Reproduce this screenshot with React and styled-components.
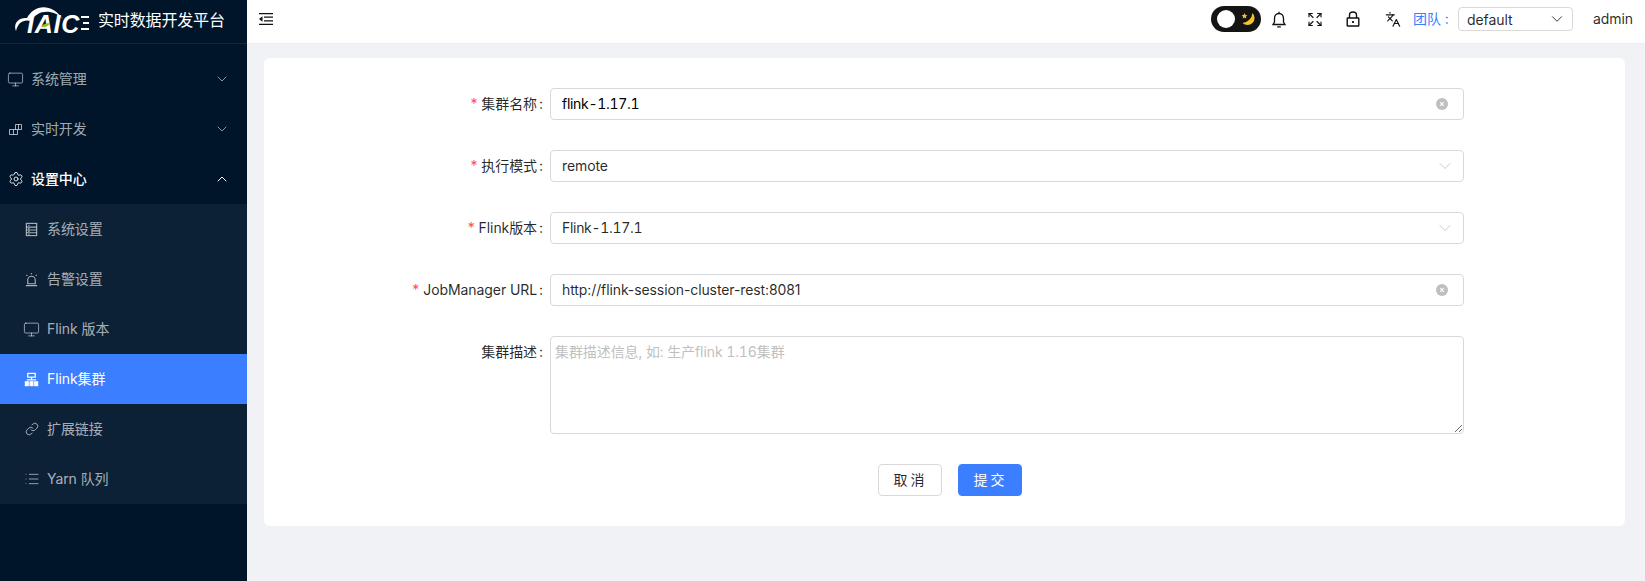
import React from "react";
import styled, { createGlobalStyle } from "styled-components";
import { ChevronDown, ChevronUp, Monitor, Settings, Link, List, Expand, Languages } from "lucide-react";

const GlobalStyle = createGlobalStyle`
  html, body {
    margin: 0;
    height: 100%;
    overflow: hidden;
    background: #f0f2f5;
    font-family: Inter, "Noto Sans CJK SC", sans-serif;
    font-size: 14px;
    letter-spacing: -0.08px;
    color: rgba(0, 0, 0, 0.85);
  }
  * { box-sizing: border-box; }
`;

const Layout = styled.div`
  display: flex;
  width: 1645px;
  height: 581px;
`;

const Sider = styled.aside`
  width: 247px;
  flex: none;
  background: #001529;
  color: rgba(255, 255, 255, 0.65);
`;

const LogoBar = styled.div`
  display: flex;
  height: 44px;
  padding-left: 14px;
  border-bottom: 1px solid #14263a;
`;

const LogoMark = styled.div`
  position: relative;
  width: 76px;
  height: 36px;
  flex: none;
  svg { position: absolute; left: 0; top: 0; }
`;

const LogoLetters = styled.span`
  position: absolute;
  left: 13px;
  top: 12px;
  font: italic 700 25px/25px "Liberation Sans", sans-serif;
  letter-spacing: 0.8px;
  color: #fff;
`;

const LogoLeaf = styled.svg`
  z-index: 1;
`;

const LogoTitle = styled.span`
  margin: 8px 0 0 8px;
  color: #fff;
  font-size: 16px;
  line-height: 24px;
  letter-spacing: -0.15px;
  white-space: nowrap;
`;

const Menu = styled.nav`
  padding-top: 10px;
`;

const MenuItem = styled.div`
  display: flex;
  align-items: center;
  height: 50px;
  padding-left: ${(p) => (p.$sub ? "24px" : "8px")};
  padding-right: 17px;
  gap: 8px;
  background: ${(p) => (p.$active ? "#3b7eff" : "transparent")};
  color: ${(p) => (p.$active || p.$open ? "#fff" : "rgba(255,255,255,0.65)")};
  font-size: 14px;
  font-weight: ${(p) => (p.$open ? 500 : 400)};
  svg { flex: none; }
`;

const MenuIcon = styled.span`
  display: flex;
  justify-content: center;
  align-items: center;
  width: 15px;
  flex: none;
`;

const MenuLabel = styled.span`
  flex: 1;
  margin-bottom: 2px;
`;

const SubMenu = styled.div`
  background: #0d2136;
`;

const Main = styled.div`
  flex: 1;
  min-width: 0;
  display: flex;
  flex-direction: column;
`;

const Header = styled.header`
  display: flex;
  align-items: center;
  height: 44px;
  flex: none;
  padding: 0 12px 5px 12px;
  background: #fff;
  border-bottom: 1px solid #eceef1;
`;

const HeaderTools = styled.div`
  margin-left: auto;
  display: flex;
  align-items: center;
  color: #111;
`;

const ThemeSwitch = styled.div`
  position: relative;
  width: 50px;
  height: 26px;
  border-radius: 13px;
  background: #141414;
  margin-right: 10px;
`;

const SwitchKnob = styled.span`
  position: absolute;
  left: 6px;
  top: 4px;
  width: 18px;
  height: 18px;
  border-radius: 50%;
  background: #fff;
`;

const SwitchMoon = styled.svg`
  position: absolute;
  right: 4px;
  top: 4px;
`;

const ToolIcon = styled.span`
  display: flex;
  width: 16px;
  justify-content: center;
  margin-right: ${(p) => p.$gap}px;
`;

const TeamLabel = styled.span`
  width: 35px;
  color: #3b7eff;
  margin: 0 10px 2px 0;
  white-space: nowrap;
`;

const TeamSelect = styled.div`
  display: flex;
  align-items: center;
  justify-content: space-between;
  width: 115px;
  height: 24px;
  padding: 0 6px 0 8px;
  border: 1px solid #d9d9d9;
  border-radius: 4px;
  margin-right: 20px;
  color: rgba(0, 0, 0, 0.85);
`;

const UserName = styled.span`
  color: rgba(0, 0, 0, 0.85);
  margin-bottom: 1px;
`;

const Content = styled.main`
  flex: 1;
  padding: 14px 20px 0 17px;
`;

const Card = styled.section`
  height: 468px;
  background: #fff;
  border-radius: 6px;
  padding-top: 30px;
`;

const Form = styled.form`
  display: grid;
  grid-template-columns: 286px 914px;
  row-gap: 30px;
  align-items: start;
`;

const FieldLabel = styled.label`
  display: flex;
  justify-content: flex-end;
  align-items: center;
  height: 32px;
  padding-bottom: 2px;
  white-space: nowrap;
`;

const Required = styled.span`
  color: #ff4d4f;
  margin-right: 4px;
`;

const Colon = styled.span`
  margin: 0 7px 0 2px;
`;

const Control = styled.div`
  display: flex;
  align-items: center;
  justify-content: space-between;
  height: 32px;
  padding: 0 15px 2px 11px;
  border: 1px solid #d9d9d9;
  border-radius: 4px;
  color: ${(p) => (p.$strong ? "#000" : "rgba(0,0,0,0.85)")};
  font-variant-numeric: ${(p) => (p.$tabular ? "tabular-nums" : "normal")};
  letter-spacing: ${(p) => (p.$tabular ? "-0.3px" : "-0.1px")};
`;

const TextArea = styled.textarea`
  display: block;
  width: 100%;
  height: 98px;
  padding: 4px;
  border: 1px solid #d9d9d9;
  border-radius: 4px;
  font: inherit;
  font-variant-numeric: tabular-nums;
  letter-spacing: inherit;
  outline: none;
  &::placeholder { color: #bfbfbf; }
`;

const Actions = styled.div`
  display: flex;
  justify-content: center;
  gap: 16px;
  margin: 30px 0 0 11px;
`;

const Button = styled.button`
  width: 64px;
  height: 32px;
  padding: 0 0 2px 1px;
  border: 1px solid ${(p) => (p.$primary ? "#3b7eff" : "#d9d9d9")};
  border-radius: 4px;
  background: ${(p) => (p.$primary ? "#3b7eff" : "#fff")};
  color: ${(p) => (p.$primary ? "#fff" : "rgba(0,0,0,0.85)")};
  font: inherit;
  letter-spacing: 3px;
`;

const ArrowBox = styled.span`
  display: flex;
  margin: 2px -7px 0 0;
`;

const Clear = () => (
  <svg width="12" height="12" viewBox="0 0 12 12" style={{ marginTop: 2 }}>
    <circle cx="6" cy="6" r="6" fill="#bfbfbf" />
    <path d="M4.200 4.200l3.600 3.600M7.800 4.200l-3.600 3.600" stroke="#fff" strokeWidth="1.100" />
  </svg>
);

const Arrow = () => (
  <ArrowBox>
    <ChevronDown size={20} color="#bfbfbf" strokeWidth={1} />
  </ArrowBox>
);

const ClusterIcon = () => (
  <svg width="15" height="15" viewBox="0 0 15 15" fill="none" stroke="currentColor" strokeWidth="1">
    <path d="M1.500 7.500h8v5h-8zM5.500 7.500v5M7.500 7.500V2.500h6v5h-4M10.500 2.500v5" />
  </svg>
);

const TableIcon = () => (
  <svg width="15" height="15" viewBox="0 0 16 16" fill="none" stroke="currentColor" strokeWidth="1.200">
    <rect x="2.500" y="1.500" width="11" height="13" />
    <path d="M2.500 5.500h11M2.500 8.500h11M2.500 11.500h11M4.500 3.500h1.500M4.500 7h1.500M4.500 10h1.500M4.500 13h1.500" />
  </svg>
);

const AlarmIcon = () => (
  <svg width="15" height="15" viewBox="0 0 16 16" fill="none" stroke="currentColor" strokeWidth="1.200">
    <path d="M4 12.500V8.500a4 4 0 0 1 8 0v4zM2 14.500h12M8 1v1.500M2.500 3l1 1M13.500 3l-1 1" />
  </svg>
);

const NodesIcon = () => (
  <svg width="15" height="15" viewBox="0 0 16 16" fill="none" stroke="currentColor" strokeWidth="1.300">
    <rect x="4" y="1.500" width="8" height="4" />
    <path d="M8 5.500v3M3 8.500h10" />
    <rect x="1.500" y="10.500" width="3" height="4" fill="currentColor" />
    <rect x="6.500" y="10.500" width="3" height="4" fill="currentColor" />
    <rect x="11.500" y="10.500" width="3" height="4" fill="currentColor" />
  </svg>
);

const BackIcon = () => (
  <svg width="14" height="12" viewBox="0 0 14 12" fill="none" stroke="#111" strokeWidth="1.300">
    <path d="M0 .7h14M5 4.200h9M5 7.800h9M0 11.300h14" />
    <path d="M3.500 3.200v5.600L0 6z" fill="#111" stroke="none" />
  </svg>
);

const BellIcon = () => (
  <svg width="14" height="17" viewBox="0 0 14 17" fill="none" stroke="#111" strokeWidth="1.300">
    <path d="M7 2.500c-3 0-4.500 2.200-4.500 5V11L1 13.500h12L11.500 11V7.500c0-2.800-1.500-5-4.500-5zM7 .8v1.700M5.200 15.800h3.600" />
  </svg>
);

const LockIcon = () => (
  <svg width="14" height="16" viewBox="0 0 14 16" fill="none" stroke="#111" strokeWidth="1.400">
    <rect x="1.200" y="7" width="11.600" height="8" rx="0.500" />
    <path d="M3.500 7V4a3.500 3 0 0 1 7 0v3" />
    <path d="M7 10v2" strokeWidth="1.800" />
  </svg>
);

export default function App() {
  return (
    <Layout>
      <GlobalStyle />
      <Sider>
        <LogoBar>
          <LogoMark>
            <svg width="76" height="36" viewBox="0 0 76 36" fill="none">
              <path d="M2 31C-1 24 4 17 13 18 19 6 36 1 49 19 38 8 23 10 17 21 10 19 4 22 2 31Z" fill="#fff" />
              <path d="M67 17h8M69 23h6M67 29h8" stroke="#fff" strokeWidth="2" />
            </svg>
            <LogoLetters>IAIC</LogoLetters>
            <LogoLeaf width="76" height="36" viewBox="0 0 76 36">
              <path d="M27 27C29 24 32 23 36 23 35 26 31 28 27 27Z" fill="#8fc31f" />
            </LogoLeaf>
          </LogoMark>
          <LogoTitle>实时数据开发平台</LogoTitle>
        </LogoBar>
        <Menu>
          <MenuItem>
            <MenuIcon><Monitor size={17} strokeWidth={1.2} /></MenuIcon>
            <MenuLabel>系统管理</MenuLabel>
            <ChevronDown size={16} strokeWidth={1.3} />
          </MenuItem>
          <MenuItem>
            <MenuIcon><ClusterIcon /></MenuIcon>
            <MenuLabel>实时开发</MenuLabel>
            <ChevronDown size={16} strokeWidth={1.3} />
          </MenuItem>
          <MenuItem $open>
            <MenuIcon><Settings size={16} strokeWidth={1.3} /></MenuIcon>
            <MenuLabel>设置中心</MenuLabel>
            <ChevronUp size={16} strokeWidth={1.5} />
          </MenuItem>
          <SubMenu>
            <MenuItem $sub><MenuIcon><TableIcon /></MenuIcon><MenuLabel>系统设置</MenuLabel></MenuItem>
            <MenuItem $sub><MenuIcon><AlarmIcon /></MenuIcon><MenuLabel>告警设置</MenuLabel></MenuItem>
            <MenuItem $sub><MenuIcon><Monitor size={17} strokeWidth={1.2} /></MenuIcon><MenuLabel>Flink 版本</MenuLabel></MenuItem>
            <MenuItem $sub $active><MenuIcon><NodesIcon /></MenuIcon><MenuLabel>Flink集群</MenuLabel></MenuItem>
            <MenuItem $sub><MenuIcon><Link size={14} strokeWidth={1.6} /></MenuIcon><MenuLabel>扩展链接</MenuLabel></MenuItem>
            <MenuItem $sub><MenuIcon><List size={16} strokeWidth={1.3} /></MenuIcon><MenuLabel>Yarn 队列</MenuLabel></MenuItem>
          </SubMenu>
        </Menu>
      </Sider>
      <Main>
        <Header>
          <BackIcon />
          <HeaderTools>
            <ThemeSwitch>
              <SwitchKnob />
              <SwitchMoon width="18" height="18" viewBox="0 0 18 18">
                <path d="M13.500 3A7 7 0 1 1 3.500 13 11 11 0 0 0 13.500 3Z" fill="#f5c330" />
                <path d="M5.500 3l.9 1.900 2 .3-1.500 1.400.4 2-1.800-1-1.800 1 .4-2L2.600 5.200l2-.3z" fill="#f5c330" />
              </SwitchMoon>
            </ThemeSwitch>
            <ToolIcon $gap={20}><BellIcon /></ToolIcon>
            <ToolIcon $gap={22}><Expand size={17} strokeWidth={1.7} /></ToolIcon>
            <ToolIcon $gap={24}><LockIcon /></ToolIcon>
            <ToolIcon $gap={12}><Languages size={17} strokeWidth={1.7} /></ToolIcon>
            <TeamLabel>团队 :</TeamLabel>
            <TeamSelect>default<ChevronDown size={18} strokeWidth={1.2} /></TeamSelect>
            <UserName>admin</UserName>
          </HeaderTools>
        </Header>
        <Content>
          <Card>
            <Form>
              <FieldLabel><Required>*</Required>集群名称<Colon>:</Colon></FieldLabel>
              <Control $strong $tabular>flink-1.17.1<Clear /></Control>
              <FieldLabel><Required>*</Required>执行模式<Colon>:</Colon></FieldLabel>
              <Control>remote<Arrow /></Control>
              <FieldLabel><Required>*</Required>Flink版本<Colon>:</Colon></FieldLabel>
              <Control $tabular>Flink-1.17.1<Arrow /></Control>
              <FieldLabel><Required>*</Required>JobManager URL<Colon>:</Colon></FieldLabel>
              <Control>http://flink-session-cluster-rest:8081<Clear /></Control>
              <FieldLabel>集群描述<Colon>:</Colon></FieldLabel>
              <TextArea placeholder="集群描述信息, 如: 生产flink 1.16集群" />
            </Form>
            <Actions>
              <Button type="button">取消</Button>
              <Button type="button" $primary>提交</Button>
            </Actions>
          </Card>
        </Content>
      </Main>
    </Layout>
  );
}
